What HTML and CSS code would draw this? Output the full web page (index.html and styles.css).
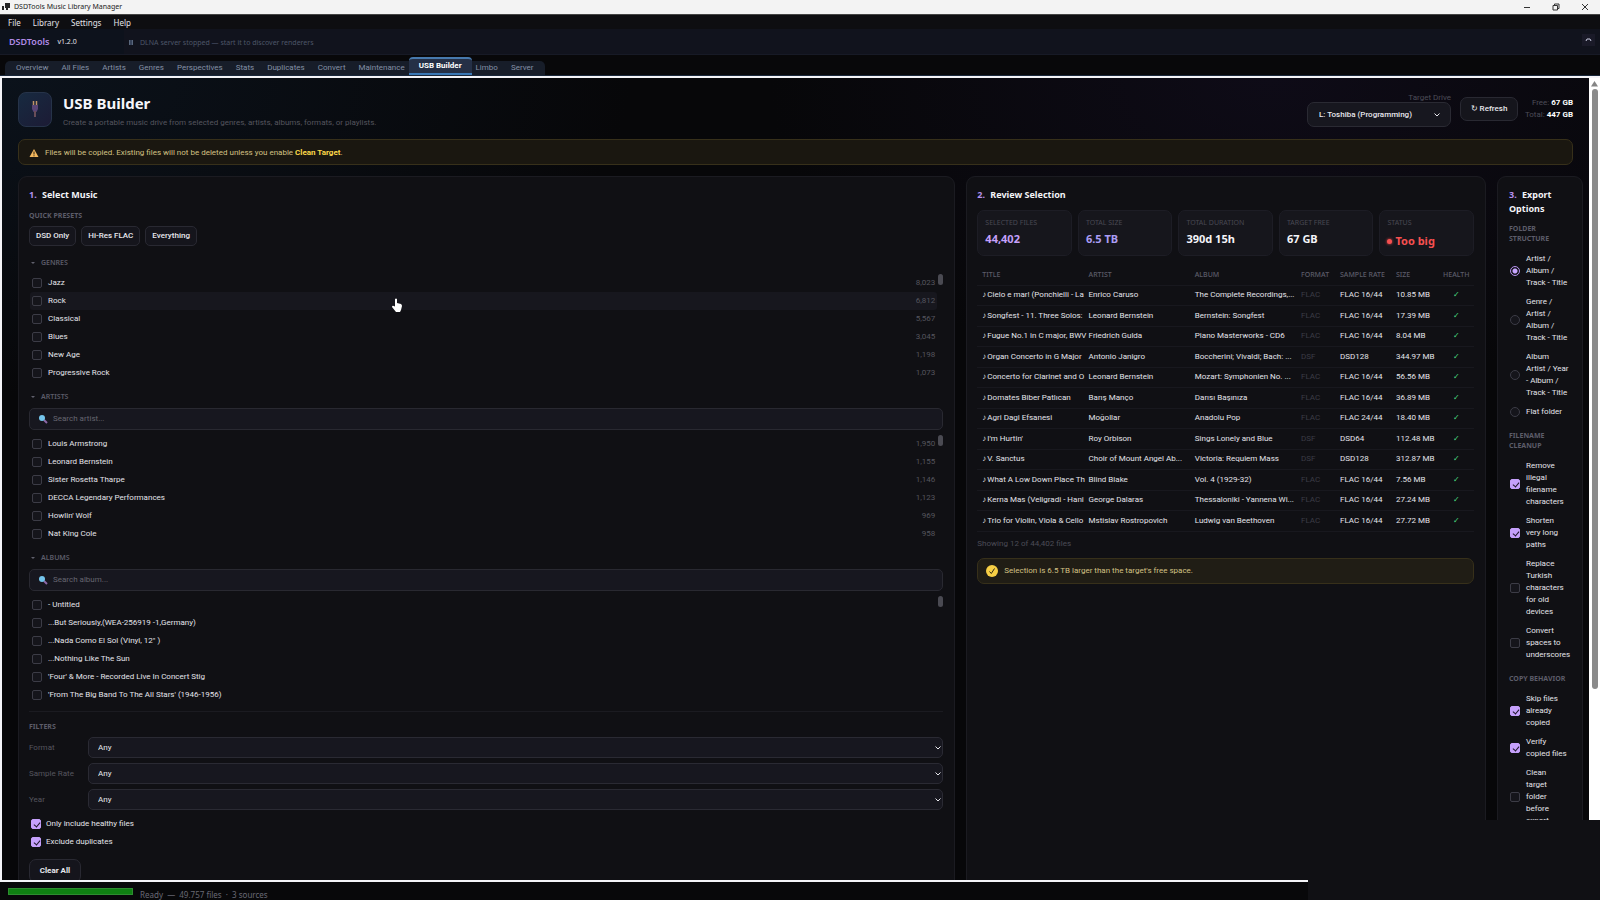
FILE: index.html
```html
<!DOCTYPE html>
<html lang="en">
<head>
    <meta charset="UTF-8">
    <meta name="viewport" content="width=device-width, initial-scale=1.0">
    <title>DSDTools Music Library Manager</title>
    <link rel="stylesheet" href="styles.css">
</head>
<body>
    <div class="titlebar">
        <svg class="app-icon" width="8" height="8" viewBox="0 0 8 8"><path fill="#222" d="M3 0h5v5H6v2H4V5H3zM0 3h2v4H0z"/></svg>
        <span>DSDTools Music Library Manager</span>
        <div class="window-buttons">
            <svg width="8" height="8" viewBox="0 0 8 8"><path d="M1 4.5h6"/></svg>
            <svg width="8" height="8" viewBox="0 0 8 8"><path d="M1 2.500h4.500v4.500H1zM2.500 2V1H7v4.500H6"/></svg>
            <svg width="8" height="8" viewBox="0 0 8 8"><path d="M1 1l6 6M7 1L1 7"/></svg>
        </div>
    </div>

    <nav class="menubar">
        <a href="#">File</a>
        <a href="#">Library</a>
        <a href="#">Settings</a>
        <a href="#">Help</a>
    </nav>

    <div class="brandbar">
        <div class="brand"><b>DSDTools</b><span>v1.2.0</span></div>
        <div class="dlna"><i class="pause"></i>DLNA server stopped — start it to discover renderers</div>
        <button type="button" class="collapse" aria-label="Collapse">
            <svg width="7" height="5" viewBox="0 0 7 5"><path d="M1 4l1-2h3l1 2" fill="none" stroke="#c9cbe0"/></svg>
        </button>
    </div>

    <div class="tabs-row">
        <nav class="tabs">
            <a href="#">Overview</a>
            <a href="#">All Files</a>
            <a href="#">Artists</a>
            <a href="#">Genres</a>
            <a href="#">Perspectives</a>
            <a href="#">Stats</a>
            <a href="#">Duplicates</a>
            <a href="#">Convert</a>
            <a href="#">Maintenance</a>
            <a href="#" class="active">USB Builder</a>
            <a href="#">Limbo</a>
            <a href="#">Server</a>
        </nav>
    </div>

    <div class="view">
        <main>
            <header>
                <div class="usb-icon">
                    <svg width="12" height="20" viewBox="0 0 12 20">
                        <path d="M4.500 2v4M7.500 2v4" stroke="#c09468" stroke-width="1.500"/>
                        <path d="M3 6h6v4l-1.500 3h-3L3 10z" fill="#594576"/>
                        <path d="M6 12v6" stroke="#694d59" stroke-width="2"/>
                    </svg>
                </div>
                <div class="heading">
                    <h1>USB Builder</h1>
                    <p>Create a portable music drive from selected genres, artists, albums, formats, or playlists.</p>
                </div>
                <div class="drive">
                    <label for="drive">Target Drive</label>
                    <div class="select-wrap">
                        <select id="drive"><option>L: Toshiba (Programming)</option></select>
                        <svg width="8" height="6" viewBox="0 0 8 6"><path d="M1.500 1.500L4 4l2.500-2.500"/></svg>
                    </div>
                </div>
                <button type="button" class="btn refresh">↻ Refresh</button>
                <div class="space">Free: <b>67 GB</b><br>Total: <b>447 GB</b></div>
            </header>

            <div class="notice">
                <svg width="10" height="10" viewBox="0 0 10 10"><path d="M5 1l4.500 8h-9z" fill="#f2b75e"/><path d="M5 3.500v3M5 7.300v1" stroke="#2b2111"/></svg>
                <span>Files will be copied. Existing files will not be deleted unless you enable <b>Clean Target</b>.</span>
            </div>

            <div class="columns">
                <section class="panel">
                    <h2><em>1.</em> Select Music</h2>
                    <h3>QUICK PRESETS</h3>
                    <div class="presets">
                        <button type="button" class="btn">DSD Only</button>
                        <button type="button" class="btn">Hi-Res FLAC</button>
                        <button type="button" class="btn">Everything</button>
                    </div>

                    <details open>
                        <summary>GENRES</summary>
                        <div class="list">
                            <label><input type="checkbox">Jazz<span>8,023</span></label>
                            <label class="hover"><input type="checkbox">Rock<span>6,812</span></label>
                            <label><input type="checkbox">Classical<span>5,567</span></label>
                            <label><input type="checkbox">Blues<span>3,045</span></label>
                            <label><input type="checkbox">New Age<span>1,198</span></label>
                            <label><input type="checkbox">Progressive Rock<span>1,073</span></label>
                        </div>
                    </details>

                    <details open>
                        <summary>ARTISTS</summary>
                        <div class="search">
                            <svg width="10" height="10" viewBox="0 0 10 10"><path d="M6 6l3 3" stroke="#8d68a8" stroke-width="2"/><circle cx="4" cy="4" r="3" fill="#74c5ec"/></svg>
                            <input type="text" placeholder="Search artist..." aria-label="Search artist">
                        </div>
                        <div class="list">
                            <label><input type="checkbox">Louis Armstrong<span>1,950</span></label>
                            <label><input type="checkbox">Leonard Bernstein<span>1,155</span></label>
                            <label><input type="checkbox">Sister Rosetta Tharpe<span>1,146</span></label>
                            <label><input type="checkbox">DECCA Legendary Performances<span>1,123</span></label>
                            <label><input type="checkbox">Howlin' Wolf<span>969</span></label>
                            <label><input type="checkbox">Nat King Cole<span>958</span></label>
                        </div>
                    </details>

                    <details open>
                        <summary>ALBUMS</summary>
                        <div class="search">
                            <svg width="10" height="10" viewBox="0 0 10 10"><path d="M6 6l3 3" stroke="#8d68a8" stroke-width="2"/><circle cx="4" cy="4" r="3" fill="#74c5ec"/></svg>
                            <input type="text" placeholder="Search album..." aria-label="Search album">
                        </div>
                        <div class="list">
                            <label><input type="checkbox">- Untitled</label>
                            <label><input type="checkbox">...But Seriously,(WEA-256919 -1,Germany)</label>
                            <label><input type="checkbox">...Nada Como El Sol (Vinyl, 12" )</label>
                            <label><input type="checkbox">...Nothing Like The Sun</label>
                            <label><input type="checkbox">'Four' &amp; More - Recorded Live In Concert Stig</label>
                            <label><input type="checkbox">'From The Big Band To The All Stars' (1946-1956)</label>
                        </div>
                    </details>

                    <div class="filters">
                        <h3>FILTERS</h3>
                        <div class="filter">
                            <label for="format">Format</label>
                            <div class="select-wrap">
                                <select id="format"><option>Any</option></select>
                                <svg width="8" height="6" viewBox="0 0 8 6"><path d="M1.500 1.500L4 4l2.500-2.500"/></svg>
                            </div>
                        </div>
                        <div class="filter">
                            <label for="rate">Sample Rate</label>
                            <div class="select-wrap">
                                <select id="rate"><option>Any</option></select>
                                <svg width="8" height="6" viewBox="0 0 8 6"><path d="M1.500 1.500L4 4l2.500-2.500"/></svg>
                            </div>
                        </div>
                        <div class="filter">
                            <label for="year">Year</label>
                            <div class="select-wrap">
                                <select id="year"><option>Any</option></select>
                                <svg width="8" height="6" viewBox="0 0 8 6"><path d="M1.500 1.500L4 4l2.500-2.500"/></svg>
                            </div>
                        </div>
                        <label class="toggle"><input type="checkbox" checked>Only include healthy files</label>
                        <label class="toggle"><input type="checkbox" checked>Exclude duplicates</label>
                        <button type="button" class="btn clear">Clear All</button>
                    </div>
                </section>

                <section class="panel">
                    <h2><em>2.</em> Review Selection</h2>
                    <div class="stats">
                        <div><small>SELECTED FILES</small><strong class="purple">44,402</strong></div>
                        <div><small>TOTAL SIZE</small><strong class="violet">6.5 TB</strong></div>
                        <div><small>TOTAL DURATION</small><strong>390d 15h</strong></div>
                        <div><small>TARGET FREE</small><strong>67 GB</strong></div>
                        <div><small>STATUS</small><strong class="bad"><i></i>Too big</strong></div>
                    </div>
                    <table>
                        <colgroup>
                            <col><col><col><col class="c-format"><col class="c-rate"><col class="c-size"><col class="c-health">
                        </colgroup>
                        <thead>
                            <tr><th>TITLE</th><th>ARTIST</th><th>ALBUM</th><th>FORMAT</th><th>SAMPLE RATE</th><th>SIZE</th><th>HEALTH</th></tr>
                        </thead>
                        <tbody>
                            <tr><td><i>♪</i>Cielo e mar! (Ponchielli - La</td><td>Enrico Caruso</td><td>The Complete Recordings,...</td><td>FLAC</td><td>FLAC 16/44</td><td>10.85 MB</td><td>✓</td></tr>
                            <tr><td><i>♪</i>Songfest - 11. Three Solos:</td><td>Leonard Bernstein</td><td>Bernstein: Songfest</td><td>FLAC</td><td>FLAC 16/44</td><td>17.39 MB</td><td>✓</td></tr>
                            <tr><td><i>♪</i>Fugue No.1 in C major, BWV</td><td>Friedrich Gulda</td><td>Piano Masterworks - CD6</td><td>FLAC</td><td>FLAC 16/44</td><td>8.04 MB</td><td>✓</td></tr>
                            <tr><td><i>♪</i>Organ Concerto in G Major</td><td>Antonio Janigro</td><td>Boccherini; Vivaldi; Bach: ...</td><td>DSF</td><td>DSD128</td><td>344.97 MB</td><td>✓</td></tr>
                            <tr><td><i>♪</i>Concerto for Clarinet and O</td><td>Leonard Bernstein</td><td>Mozart: Symphonien No. ...</td><td>FLAC</td><td>FLAC 16/44</td><td>56.56 MB</td><td>✓</td></tr>
                            <tr><td><i>♪</i>Domates Biber Patlıcan</td><td>Barış Manço</td><td>Darısı Başınıza</td><td>FLAC</td><td>FLAC 16/44</td><td>36.89 MB</td><td>✓</td></tr>
                            <tr><td><i>♪</i>Agri Dagi Efsanesi</td><td>Moğollar</td><td>Anadolu Pop</td><td>FLAC</td><td>FLAC 24/44</td><td>18.40 MB</td><td>✓</td></tr>
                            <tr><td><i>♪</i>I'm Hurtin'</td><td>Roy Orbison</td><td>Sings Lonely and Blue</td><td>DSF</td><td>DSD64</td><td>112.48 MB</td><td>✓</td></tr>
                            <tr><td><i>♪</i>V. Sanctus</td><td>Choir of Mount Angel Ab...</td><td>Victoria: Requiem Mass</td><td>DSF</td><td>DSD128</td><td>312.87 MB</td><td>✓</td></tr>
                            <tr><td><i>♪</i>What A Low Down Place Th</td><td>Blind Blake</td><td>Vol. 4 (1929-32)</td><td>FLAC</td><td>FLAC 16/44</td><td>7.56 MB</td><td>✓</td></tr>
                            <tr><td><i>♪</i>Kerna Mas (Veligradi - Hani</td><td>George Dalaras</td><td>Thessaloniki - Yannena Wi...</td><td>FLAC</td><td>FLAC 16/44</td><td>27.24 MB</td><td>✓</td></tr>
                            <tr><td><i>♪</i>Trio for Violin, Viola &amp; Cello</td><td>Mstislav Rostropovich</td><td>Ludwig van Beethoven</td><td>FLAC</td><td>FLAC 16/44</td><td>27.72 MB</td><td>✓</td></tr>
                        </tbody>
                    </table>
                    <p class="showing">Showing 12 of 44,402 files</p>
                    <div class="notice inner">
                        <svg width="12" height="12" viewBox="0 0 12 12"><circle cx="6" cy="6" r="6" fill="#f7cf45"/><path d="M3.500 6.500L5.300 8.500l3.200-5" fill="none" stroke="#2b2512"/></svg>
                        <span>Selection is 6.5 TB larger than the target's free space.</span>
                    </div>
                </section>

                <section class="panel options">
                    <h2><em>3.</em> Export Options</h2>
                    <h3>FOLDER STRUCTURE</h3>
                    <div class="group">
                        <label><input type="radio" name="folder" checked><span>Artist / Album / Track - Title</span></label>
                        <label><input type="radio" name="folder"><span>Genre / Artist / Album / Track - Title</span></label>
                        <label><input type="radio" name="folder"><span>Album Artist&nbsp;/&nbsp;Year - Album / Track - Title</span></label>
                        <label><input type="radio" name="folder"><span>Flat folder</span></label>
                    </div>
                    <h3>FILENAME CLEANUP</h3>
                    <div class="group">
                        <label><input type="checkbox" checked><span>Remove illegal filename characters</span></label>
                        <label><input type="checkbox" checked><span>Shorten very long paths</span></label>
                        <label><input type="checkbox"><span>Replace Turkish characters for old devices</span></label>
                        <label><input type="checkbox"><span>Convert spaces to underscores</span></label>
                    </div>
                    <h3>COPY BEHAVIOR</h3>
                    <div class="group">
                        <label><input type="checkbox" checked><span>Skip files already copied</span></label>
                        <label><input type="checkbox" checked><span>Verify copied files</span></label>
                        <label><input type="checkbox"><span>Clean target folder before export</span></label>
                    </div>
                </section>
            </div>
        </main>
        <div class="scrollbar">
            <svg width="7" height="6" viewBox="0 0 7 6"><path d="M3.500 0L7 5.500H0z" fill="#858585"/></svg>
            <div class="thumb"></div>
        </div>
    </div>

    <footer>
        <div class="progress"></div>
        <span>Ready &nbsp;—&nbsp; 49.757 files &nbsp;·&nbsp; 3 sources</span>
    </footer>

    <div class="overlay"></div>

    <svg class="cursor" width="10" height="14" viewBox="0 0 10 14"><path fill="#fff" d="M3 1q1-1 2 0v4l4 1q1 1 1 2l-1 4-1 2H4L0 9q0-2 3-.500z"/></svg>
</body>
</html>
```
FILE: styles.css
```css
* {
    box-sizing: border-box;
}

body {
    margin: 0;
    height: 100vh;
    display: flex;
    flex-direction: column;
    position: relative;
    overflow: hidden;
    background: #08080a;
    color: #e4e4ea;
    font: 8px/12px Roboto, "Noto Sans", sans-serif;
}

a {
    color: inherit;
    text-decoration: none;
}

h1, h2, h3, p {
    margin: 0;
}

button, input, select {
    font: inherit;
    color: inherit;
    margin: 0;
}

/* window chrome */
.titlebar {
    height: 15px;
    flex: none;
    display: flex;
    align-items: center;
    gap: 4px;
    padding: 0 11px 0 2px;
    background: #f3f3f3;
    border-bottom: 1px solid #444;
    color: #222;
    font: 7px/14px "Noto Sans", sans-serif;
}

.window-buttons {
    margin-left: auto;
    display: flex;
    gap: 21px;
}

.window-buttons path {
    fill: none;
    stroke: #333;
}

.menubar {
    height: 14px;
    flex: none;
    display: flex;
    align-items: center;
    gap: 12px;
    padding: 1px 0 0 8px;
    background: #0e0e11;
    font: 8px/14px "Noto Sans", sans-serif;
}

.brandbar {
    height: 26px;
    flex: none;
    display: flex;
    align-items: center;
    background: #11131d;
    border-bottom: 1px solid #171a26;
}

.brand {
    width: 124px;
    height: 100%;
    padding-left: 9px;
    display: flex;
    align-items: center;
    gap: 8px;
    background: #0d121c;
    font: 7px/12px "Noto Sans", sans-serif;
}

.brand b {
    color: #b08ae6;
    font-size: 9px;
    font-weight: 600;
}

.dlna {
    padding: 2px 0 0 5px;
    color: #4d5668;
    font: 7px/12px "Noto Sans", sans-serif;
}

.pause {
    display: inline-block;
    width: 4px;
    height: 5px;
    margin-right: 7px;
    border: solid #59677c;
    border-width: 0 1px;
    background: #37435a;
}

.collapse {
    margin: 0 5px 3px auto;
    width: 13px;
    height: 12px;
    padding: 0;
    border: 0;
    background: #1a1a28;
    line-height: 8px;
}

.tabs-row {
    height: 21px;
    flex: none;
    display: flex;
    align-items: flex-end;
    padding-left: 5px;
    border-bottom: 1px solid #19273a;
}

.tabs {
    height: 14px;
    display: flex;
    align-items: flex-end;
    padding: 0 12px 0 11px;
    gap: 13px;
    border-radius: 5px 5px 0 0;
    background: #171d29;
    color: #8490a5;
    line-height: 14px;
}

.tabs .active {
    height: 18px;
    margin: 0 -9px;
    padding: 0 10px;
    border-top: 2px solid #4779ad;
    border-bottom: 2px solid #3a78b5;
    border-radius: 4px 4px 0 0;
    background: #253046;
    color: #fff;
    font-weight: bold;
}

/* page */
.view {
    flex: 1;
    min-height: 0;
    display: flex;
    border: solid #f4f4f8;
    border-width: 2px 0 2px 2px;
}

main {
    flex: 1;
    min-width: 0;
    overflow: hidden;
    padding: 13px 16px 0;
    background: radial-gradient(ellipse at 0 0, #0b121b 0, rgba(8, 8, 10, 0) 28%), radial-gradient(ellipse at 80% 0, #0e0b17 0, rgba(8, 8, 10, 0) 28%), #070709;
}

header {
    height: 36px;
    display: flex;
    align-items: center;
}

.usb-icon {
    width: 34px;
    height: 35px;
    display: flex;
    align-items: center;
    justify-content: center;
    border: 1px solid #263349;
    border-radius: 8px;
    background: linear-gradient(140deg, #172a40, #1c1b35);
}

.heading {
    margin-left: 11px;
    margin-right: auto;
    padding-top: 3px;
    color: #55555e;
}

h1 {
    margin-bottom: 4px;
    color: #f6f6fa;
    font: bold 15px/20px "Noto Sans", sans-serif;
}

.drive {
    width: 144px;
    margin-right: 9px;
    text-align: right;
    color: #4c4c57;
}

.drive label {
    display: block;
    padding-top: 2px;
    line-height: 9px;
}

.select-wrap {
    position: relative;
}

.select-wrap select {
    display: block;
    width: 100%;
    height: 21px;
    padding: 0 9px;
    appearance: none;
    border: 1px solid #2a2a33;
    border-radius: 5px;
    background: #17171f;
    color: #e8e8ee;
}

.select-wrap svg {
    position: absolute;
    right: 1px;
    top: 8px;
    pointer-events: none;
}

.select-wrap path {
    fill: none;
    stroke: #e8e8ee;
}

.drive .select-wrap select {
    height: 25px;
    padding: 0 11px;
    border-radius: 7px;
    font-weight: 500;
}

.drive .select-wrap svg {
    top: 10px;
    right: 10px;
}

.btn {
    height: 20px;
    padding: 0 6px;
    border: 1px solid #292932;
    border-radius: 5px;
    background: #15151c;
    color: #e8e8ee;
    font-weight: 500;
}

.refresh {
    width: 58px;
    height: 24px;
    padding: 0;
    border-radius: 7px;
}

.space {
    width: 55px;
    text-align: right;
    color: #4c4c57;
}

.space b {
    color: #fff;
}

.notice {
    height: 26px;
    margin: 12px 0 11px;
    padding: 1px 10px 0;
    display: flex;
    align-items: center;
    gap: 6px;
    border: 1px solid #37301a;
    border-radius: 7px;
    background: #1a1710;
    color: #d3c184;
}

.notice b {
    color: #fbd749;
}

/* the last column runs a little past the page padding */
.columns {
    display: grid;
    grid-template-columns: 938fr 520fr 86px;
    gap: 11px;
    margin-right: -10px;
}

.panel {
    min-width: 0;
    min-height: 740px;
    padding: 11px 11px 11px 10px;
    border: 1px solid #1b1b21;
    border-radius: 9px;
    background: #101014;
}

h2 {
    color: #f4f4f8;
    font: bold 9px/14px "Noto Sans", sans-serif;
}

h2 em {
    margin-right: 3px;
    color: #b591ee;
    font-style: normal;
}

h3, summary {
    color: #5c5c69;
    font: bold 7px/10px "Noto Sans", sans-serif;
}

h3 {
    margin: 9px 0 5px;
}

.presets {
    display: flex;
    gap: 5px;
    margin-bottom: 12px;
}

summary {
    display: flex;
    align-items: center;
    gap: 6px;
    padding-left: 2px;
    font-weight: 600;
}

summary::before {
    content: "";
    border: 2px solid transparent;
    border-top-color: #60606c;
    border-bottom: 0;
}

.list {
    position: relative;
    padding: 0 6px 0 1px;
    margin: 6px 0 10px;
}

.search + .list {
    margin-top: 5px;
}

.list::after {
    content: "";
    position: absolute;
    right: 0;
    top: 0;
    width: 5px;
    height: 11px;
    border-radius: 3px;
    background: #4a4a52;
}

.list label {
    height: 18px;
    display: flex;
    align-items: center;
    gap: 6px;
    padding: 0 2px;
    border-radius: 3px;
}

.list .hover {
    background: #17171e;
}

.list span {
    margin-left: auto;
    color: #55555e;
}

input[type="checkbox"], input[type="radio"] {
    flex: none;
    width: 10px;
    height: 10px;
    appearance: none;
    position: relative;
    border: 1px solid #3c3c46;
    border-radius: 2px;
    background: #15151b;
}

input[type="radio"] {
    border-radius: 50%;
}

input[type="checkbox"]:checked {
    border-color: #c5a0fb;
    background: #c5a0fb;
}

input[type="checkbox"]:checked::after {
    content: "";
    position: absolute;
    left: 3px;
    top: 1px;
    width: 3px;
    height: 5px;
    border: solid #1d1528;
    border-width: 0 1px 1px 0;
    transform: rotate(40deg);
}

input[type="radio"]:checked {
    border-color: #b591ee;
    background: radial-gradient(circle, #c9a6ff 0 2px, #15151b 3px);
}

.search {
    height: 22px;
    margin-top: 6px;
    padding: 0 8px;
    display: flex;
    align-items: center;
    gap: 5px;
    border: 1px solid #292931;
    border-radius: 5px;
    background: #17171f;
}

.search input {
    flex: 1;
    padding: 0;
    border: 0;
    outline: 0;
    background: none;
}

.search input::placeholder {
    color: #666670;
}

.filters {
    margin-top: -3px;
    border-top: 1px solid #1b1b21;
}

.filters h3 {
    margin-top: 10px;
}

.filter {
    display: grid;
    grid-template-columns: 59px 1fr;
    align-items: center;
    margin-bottom: 5px;
    color: #55555e;
}

.toggle {
    height: 18px;
    display: flex;
    align-items: center;
    gap: 5px;
    padding-left: 2px;
}

.clear {
    width: 52px;
    height: 24px;
    margin-top: 8px;
    border-radius: 7px;
    font-weight: bold;
}

/* review */
.stats {
    display: grid;
    grid-template-columns: repeat(5, 1fr);
    gap: 6px;
    margin: 8px 0 12px;
}

.stats div {
    height: 46px;
    padding: 7px;
    border: 1px solid #1d1d25;
    border-radius: 7px;
    background: #16161c;
}

.stats small {
    display: block;
    margin-bottom: 4px;
    color: #484852;
    font: 7px/10px "Noto Sans", sans-serif;
    white-space: nowrap;
}

.stats strong {
    display: block;
    color: #f4f4f8;
    font: bold 11px/14px "Noto Sans", sans-serif;
}

.stats .purple {
    color: #c5a0fb;
}

.stats .violet {
    color: #ab9df3;
}

.stats .bad {
    color: #f65050;
    line-height: 18px;
}

.bad i {
    display: inline-block;
    width: 5px;
    height: 5px;
    margin: 0 3px 1px 0;
    border-radius: 50%;
    background: #f65050;
    box-shadow: 0 0 3px #f65050;
}

table {
    width: 100%;
    table-layout: fixed;
    border-collapse: collapse;
}

.c-format { width: 39px; }
.c-rate { width: 56px; }
.c-size { width: 47px; }
.c-health { width: 36px; }

th, td {
    height: 20px;
    padding: 0 0 0 5px;
    border-bottom: 1px solid #18181e;
    text-align: left;
    white-space: nowrap;
}

th {
    height: 17px;
    padding-bottom: 2px;
    color: #5c5c69;
    font: 500 7px/12px "Noto Sans", sans-serif;
}

tbody tr:nth-child(even) td {
    height: 21px;
}

td i {
    margin-right: 1px;
    font-style: normal;
}

td:nth-child(4) {
    color: #3c3c46;
}

td:last-child {
    padding: 0;
    color: #4ade80;
    text-align: center;
}

.showing {
    margin-top: 6px;
    color: #4c4c57;
}

.inner {
    margin: 8px 0 0;
    padding: 0 8px;
    background: #201d15;
}

/* export options */
.options {
    padding: 11px 14px 11px 11px;
}

.options h3 {
    margin: 8px 0;
}

.options .group + h3 {
    margin-top: 13px;
    margin-right: -4px;
}

.group {
    display: grid;
    gap: 7px;
    margin-top: 9px;
}

.group label {
    display: flex;
    align-items: center;
    gap: 6px;
    padding-left: 1px;
}

.scrollbar {
    width: 11px;
    display: flex;
    flex-direction: column;
    align-items: center;
    gap: 2px;
    padding-top: 3px;
    background: #fff;
}

.thumb {
    width: 6px;
    height: 600px;
    border-radius: 3px;
    background: #8b8b8b;
}

footer {
    height: 18px;
    flex: none;
    display: flex;
    align-items: center;
    gap: 7px;
    padding: 0 8px;
    color: #686875;
    font: 8px/12px "Noto Sans", sans-serif;
}

footer span {
    padding-top: 7px;
}

.progress {
    width: 125px;
    height: 7px;
    background: #0f8012;
    border: 1px solid #2d8c30;
}

.overlay {
    position: absolute;
    right: 0;
    bottom: 0;
    width: 292px;
    height: 80px;
    background: #101014;
}

.cursor {
    position: absolute;
    left: 392px;
    top: 298px;
}
```
